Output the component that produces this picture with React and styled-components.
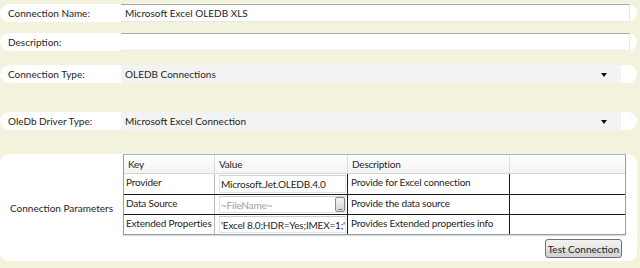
import React from "react";
import styled, { createGlobalStyle } from "styled-components";

const Global = createGlobalStyle`
  html, body { margin: 0; padding: 0; background: #F3F2DD; }
  body { font-family: Lato, "Open Sans", sans-serif; font-size: 10px; color: #1e1e1e; }
  * { box-sizing: border-box; }
`;

const Page = styled.div`
  width: 640px;
  height: 268px;
  padding: 4px 3px 0 0;
  display: flex;
  flex-direction: column;
`;

const Row = styled.div`
  display: grid;
  grid-template-columns: 121px 1fr;
  align-items: center;
  height: 18px;
  margin-top: ${(p) => p.$gap || 0}px;
  background: #fff;
  border-radius: 9px;
  padding-right: ${(p) => p.$padRight || 7}px;
`;

const Label = styled.div`
  padding-left: 8px;
  white-space: nowrap;
  line-height: 18px;
`;

const TextBox = styled.div`
  height: 18px;
  line-height: 17px;
  padding-left: 4px;
  background: #fff;
  border-top: 1px solid #a9a9a9;
  border-bottom: 1px solid #e6e6e6;
  border-right: 1px solid #e8e8e8;
  white-space: nowrap;
`;

const Select = styled.div`
  height: 18px;
  line-height: 18px;
  padding: 0 14px 0 4px;
  background: #F3F3F3;
  display: flex;
  align-items: center;
  justify-content: space-between;
  white-space: nowrap;
`;

const Arrow = styled.span`
  width: 0;
  height: 0;
  border-left: 3.5px solid transparent;
  border-right: 3.5px solid transparent;
  border-top: 4px solid #111;
  margin-top: 1px;
`;

const Panel = styled.div`
  margin-top: 24px;
  height: 107px;
  background: #fff;
  border-radius: 9px;
  display: grid;
  grid-template-columns: 123px 503px;
`;

const PanelLabel = styled.div`
  align-self: center;
  padding-left: 10px;
  white-space: nowrap;
`;

const Right = styled.div`
  display: flex;
  flex-direction: column;
`;

const Table = styled.div`
  border: 1px solid #8ea3bb;
  border-top-color: #a7b6c7;
  box-shadow: 0 1px 1px rgba(0,0,0,0.15);
  letter-spacing: -0.2px;
`;

const cols = "91px 133px 162px 1fr";

const Header = styled.div`
  display: grid;
  grid-template-columns: ${cols};
  height: 19px;
  background: linear-gradient(#ffffff, #f3f3f3);
  border-bottom: 1px solid #d5d5d5;
`;

const HCell = styled.div`
  padding-left: 4px;
  line-height: 19px;
  border-right: ${(p) => (p.$last ? "none" : "1px solid #dedede")};
`;

const BodyRow = styled.div`
  display: grid;
  grid-template-columns: ${cols};
  height: 20px;
  border-top: ${(p) => (p.$first ? "none" : "1px solid #1a1a1a")};
`;

const Cell = styled.div`
  padding-left: ${(p) => (p.$pad === undefined ? 3 : p.$pad)}px;
  line-height: 16px;
  white-space: nowrap;
  overflow: hidden;
  border-right: ${(p) =>
    p.$last ? "none" : p.$light ? "1px solid #b8b8b8" : "1px solid #1a1a1a"};
  display: flex;
  align-items: ${(p) => (p.$top ? "flex-start" : "stretch")};
`;

const ValueBox = styled.div`
  flex: 1;
  margin: 1px 1px 1px 4px;
  border: 1px solid #e3e3e3;
  border-top-color: #cfcfcf;
  background: #fff;
  padding-left: 1px;
  line-height: 16px;
  color: ${(p) => (p.$muted ? "#a0a0a0" : "#1e1e1e")};
  display: flex;
  justify-content: space-between;
  overflow: hidden;
`;

const Dots = styled.span`
  flex: none;
  width: 10px;
  height: 15px;
  border: 1px solid #8a8a8a;
  border-radius: 2px;
  background: linear-gradient(#f6f6f6, #d4d4d4);
  color: #222;
  font-size: 7px;
  letter-spacing: -0.5px;
  line-height: 18px;
  text-align: center;
  overflow: hidden;
`;

const ButtonRow = styled.div`
  display: flex;
  justify-content: flex-end;
  padding: 4px 4px 0 0;
`;

const Button = styled.button`
  font-family: inherit;
  font-size: 10px;
  height: 19px;
  padding: 0 2px;
  border: 1px solid #707070;
  border-radius: 3px;
  background: linear-gradient(#f2f2f2, #e8e8e8 50%, #dddddd 51%, #d2d2d2);
  color: #1e1e1e;
`;

const params = [
  { key: "Provider", value: "Microsoft.Jet.OLEDB.4.0", desc: "Provide for Excel connection" },
  { key: "Data Source", value: "~FileName~", desc: "Provide the data source", muted: true, browse: true },
  { key: "Extended Properties", value: "'Excel 8.0;HDR=Yes;IMEX=1;'", desc: "Provides Extended properties info" },
];

export default function App() {
  return (
    <>
      <Global />
      <Page>
        <Row>
          <Label>Connection Name:</Label>
          <TextBox>Microsoft Excel OLEDB XLS</TextBox>
        </Row>
        <Row $gap={11}>
          <Label>Description:</Label>
          <TextBox />
        </Row>
        <Row $gap={14} $padRight={16}>
          <Label>Connection Type:</Label>
          <Select>
            OLEDB Connections
            <Arrow />
          </Select>
        </Row>
        <Row $gap={29} $padRight={16}>
          <Label>OleDb Driver Type:</Label>
          <Select>
            Microsoft Excel Connection
            <Arrow />
          </Select>
        </Row>
        <Panel>
          <PanelLabel>Connection Parameters</PanelLabel>
          <Right>
            <Table>
              <Header>
                <HCell>Key</HCell>
                <HCell>Value</HCell>
                <HCell>Description</HCell>
                <HCell $last />
              </Header>
              {params.map((p, i) => (
                <BodyRow key={p.key} $first={i === 0}>
                  <Cell $light $top $pad={2}>{p.key}</Cell>
                  <Cell $pad={0}>
                    <ValueBox $muted={p.muted}>
                      <span>{p.value}</span>
                      {p.browse && <Dots>...</Dots>}
                    </ValueBox>
                  </Cell>
                  <Cell $top>{p.desc}</Cell>
                  <Cell $last />
                </BodyRow>
              ))}
            </Table>
            <ButtonRow>
              <Button>Test Connection</Button>
            </ButtonRow>
          </Right>
        </Panel>
      </Page>
    </>
  );
}
